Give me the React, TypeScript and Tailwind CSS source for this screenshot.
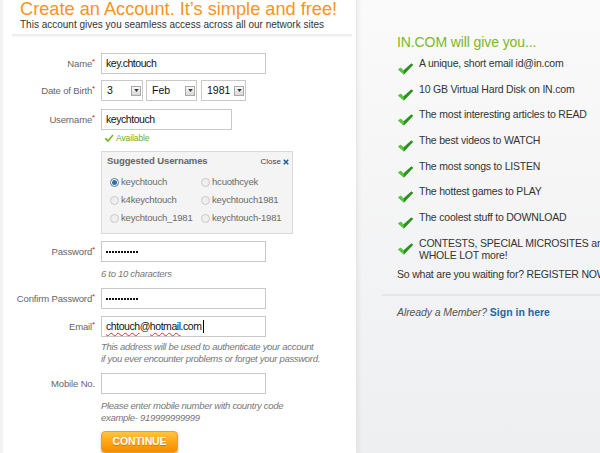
const Check = ({ className = "" }: { className?: string }) => (
  <svg viewBox="0 0 16 12" className={className}>
    <path d="M0.6 6.6 L3.2 4.8 L6 7.6 L13.8 0.4 L15.6 1.8 L6.4 11.6 Z" fill="#41b02c" />
    <path d="M6.4 11.6 L15.6 1.8 L13.8 0.4 L6 7.6 Z" fill="#2a9322" />
    <path d="M0.6 6.6 L3.2 4.8 L6 7.6 L6.4 11.6 Z" fill="#5cc43f" />
  </svg>
);

const SmallCheck = () => (
  <svg viewBox="0 0 12 11" className="w-[10px] h-[9px] shrink-0">
    <path d="M0.5 6 L2.6 4.6 L4.7 7 L10.2 0.6 L11.6 1.8 L4.9 10.2 Z" fill="#7ab829" />
  </svg>
);

const Arrow = () => (
  <span className="w-[10px] h-[10px] shrink-0 border border-[#a9a9a9] bg-gradient-to-b from-[#f7f7f7] to-[#d8d8d8] flex items-center justify-center">
    <svg viewBox="0 0 6 4" className="w-[5px] h-[3px]">
      <path d="M0 0 L6 0 L3 4 Z" fill="#333" />
    </svg>
  </span>
);

const Label = ({ text, req = true }: { text: string; req?: boolean }) => (
  <div className="w-[95px] text-right text-[9.5px] tracking-[-0.15px] leading-[12px] text-[#666] shrink-0 whitespace-nowrap">
    {text}
    {req && <span className="text-[#d0202a] text-[8px] align-top leading-[8px]">*</span>}
  </div>
);

const Dots = () => (
  <div className="flex gap-[1px]">
    {Array.from({ length: 11 }).map((_, i) => (
      <span key={i} className="w-[2px] h-[2px] bg-[#111]" />
    ))}
  </div>
);

const Input = ({ children, w }: { children?: React.ReactNode; w: string }) => (
  <div className={`${w} h-[21px] ml-[6px] border border-[#c9c9c9] bg-white flex items-center pl-[4px] text-[10.5px] tracking-[-0.45px] text-[#111] whitespace-nowrap`}>
    {children}
  </div>
);

const Select = ({ value, w }: { value: string; w: string }) => (
  <div className={`${w} h-[21px] border border-[#c9c9c9] bg-white flex items-center justify-between pl-[5px] pr-[1px] text-[10.5px] text-[#111]`}>
    <span>{value}</span>
    <Arrow />
  </div>
);

const Radio = ({ label, on = false }: { label: string; on?: boolean }) => (
  <div className="flex items-center gap-[2px] h-[18px] whitespace-nowrap">
    <span
      className={`w-[9px] h-[9px] shrink-0 rounded-full border ${on ? "border-[#55799b] bg-white" : "border-[#c9c9c9] bg-[#efefef]"} flex items-center justify-center`}
    >
      {on && <span className="w-[5px] h-[5px] rounded-full bg-[#2d6fa8]" />}
    </span>
    <span className="text-[9.5px] tracking-[-0.2px] text-[#6a6a6a]">{label}</span>
  </div>
);

const Hint = ({ children }: { children: React.ReactNode }) => (
  <div className="ml-[101px] text-[9.5px] tracking-[-0.3px] italic text-[#777] leading-[12px] whitespace-nowrap">{children}</div>
);

const perks = [
  "A unique, short email id@in.com",
  "10 GB Virtual Hard Disk on IN.com",
  "The most interesting articles to READ",
  "The best videos to WATCH",
  "The most songs to LISTEN",
  "The hottest games to PLAY",
  "The coolest stuff to DOWNLOAD",
];

export default function App() {
  return (
    <div className="w-[600px] h-[453px] overflow-hidden flex bg-white font-['Liberation_Sans',Arial,sans-serif]">
      {/* Left: form */}
      <div className="w-[356px] shrink-0 border-l-[3px] border-[#f2f2f2]">
        <div className="pl-[17px] -mt-[1px]">
          <h1 className="text-[18.2px] leading-[20px] text-[#f7941d] whitespace-nowrap">Create an Account. It’s simple and free!</h1>
          <p className="text-[10px] leading-[12px] text-[#333] whitespace-nowrap">This account gives you seamless access across all our network sites</p>
        </div>
        <div className="ml-[9px] mr-[4px] mt-[3px] h-[3px] bg-gradient-to-b from-[#e9e9e9] to-[#f8f8f8]" />

        <div className="mt-[16px] -ml-[3px]">
          <div className="flex items-center">
            <Label text="Name" />
            <Input w="w-[165px]">key.chtouch</Input>
          </div>

          <div className="flex items-center mt-[6px]">
            <Label text="Date of Birth" />
            <div className="flex ml-[6px]">
              <Select value="3" w="w-[42px]" />
              <div className="ml-[3px]">
                <Select value="Feb" w="w-[51px]" />
              </div>
              <div className="ml-[4px]">
                <Select value="1981" w="w-[45px]" />
              </div>
            </div>
          </div>

          <div className="flex items-center mt-[8px]">
            <Label text="Username" />
            <Input w="w-[131px]">keychtouch</Input>
          </div>
          <div className="ml-[104px] mt-[2px] flex items-center gap-[2px] h-[12px]">
            <SmallCheck />
            <span className="text-[8.5px] tracking-[-0.1px] leading-[12px] text-[#6ab023]">Available</span>
          </div>

          <div className="ml-[101px] mt-[7px] w-[192px] h-[83px] border border-[#dadada] bg-[#f4f4f4] pl-[5px] pt-[3px] relative">
            <div className="absolute right-[3px] top-[5px] flex items-center gap-[2px]">
              <span className="text-[8px] text-[#444] leading-[9px]">Close</span>
              <svg viewBox="0 0 8 8" className="w-[6px] h-[6px]">
                <path d="M1 1 L7 7 M7 1 L1 7" stroke="#1c5fa0" strokeWidth="2" />
              </svg>
            </div>
            <div className="text-[9.5px] tracking-[-0.1px] font-bold text-[#666] leading-[12px]">Suggested Usernames</div>
            <div className="grid grid-cols-[91px_1fr] mt-[6px] ml-[3px]">
              <Radio label="keychtouch" on />
              <Radio label="hcuothcyek" />
              <Radio label="k4keychtouch" />
              <Radio label="keychtouch1981" />
              <Radio label="keychtouch_1981" />
              <Radio label="keychtouch-1981" />
            </div>
          </div>

          <div className="flex items-center mt-[7px]">
            <Label text="Password" />
            <Input w="w-[165px]">
              <Dots />
            </Input>
          </div>
          <div className="mt-[6px] mb-[8px] h-[12px]">
            <Hint>6 to 10 characters</Hint>
          </div>

          <div className="flex items-center">
            <Label text="Confirm Password" />
            <Input w="w-[165px]">
              <Dots />
            </Input>
          </div>

          <div className="flex items-center mt-[7px]">
            <Label text="Email" />
            <Input w="w-[165px]">
              <span className="underline decoration-wavy decoration-[#e0302a] decoration-1 underline-offset-2">chtouch</span>
              @
              <span className="underline decoration-wavy decoration-[#e0302a] decoration-1 underline-offset-2">hotmail</span>
              .com
              <span className="w-px h-[13px] bg-black ml-[1px]" />
            </Input>
          </div>
          <div className="mt-[4px]">
            <Hint>
              This address will be used to authenticate your account
              <br />
              if you ever encounter problems or forget your password.
            </Hint>
          </div>

          <div className="flex items-center mt-[8px]">
            <Label text="Mobile No." req={false} />
            <Input w="w-[165px]" />
          </div>
          <div className="mt-[6px]">
            <Hint>
              Please enter mobile number with country code
              <br />
              example- 919999999999
            </Hint>
          </div>

          <div className="ml-[101px] mt-[7px] w-[77px] h-[22px] rounded-[4px] bg-gradient-to-b from-[#ffc53d] via-[#ffa412] to-[#f58c00] border border-[#eaa12a] shadow-[0_1px_2px_rgba(0,0,0,0.3)] flex items-center justify-center text-[10.5px] tracking-[-0.1px] font-bold text-white [text-shadow:0_1px_0_rgba(160,80,0,0.5)]">
            CONTINUE
          </div>
        </div>
      </div>

      {/* Right: benefits */}
      <div className="flex-1 bg-gradient-to-b from-[#fafafa] to-[#eeeff1] border-l border-[#e6e6e6] shadow-[inset_4px_0_4px_-2px_rgba(0,0,0,0.05)]">
        <div className="pl-[40px] pt-[33px]">
          <h2 className="text-[14px] tracking-[-0.1px] leading-[18px] text-[#7ab829] whitespace-nowrap">IN.COM will give you...</h2>
          <ul className="mt-[6px]">
            {perks.map((p) => (
              <li key={p} className="flex items-start h-[25.7px]">
                <Check className="w-[17px] h-[12px] mt-[6px] shrink-0" />
                <span className="ml-[5px] text-[10.5px] tracking-[-0.2px] leading-[12px] text-[#333] whitespace-nowrap">{p}</span>
              </li>
            ))}
            <li className="flex items-start">
              <Check className="w-[17px] h-[12px] mt-[6px] shrink-0" />
              <span className="ml-[5px] text-[10.5px] tracking-[-0.2px] leading-[12px] text-[#333] whitespace-nowrap">
                CONTESTS, SPECIAL MICROSITES and a
                <br />
                WHOLE LOT more!
              </span>
            </li>
          </ul>
          <p className="mt-[7px] text-[10.5px] tracking-[-0.2px] leading-[12px] text-[#333] whitespace-nowrap">So what are you waiting for? REGISTER NOW!</p>
        </div>
        <div className="ml-[25px] mt-[14px] h-[2px] bg-[#e4e6e8]" />
        <div className="pl-[40px] mt-[10px] text-[10.5px] leading-[13px] whitespace-nowrap">
          <span className="italic text-[#555] tracking-[-0.1px]">Already a Member?</span>{" "}
          <span className="font-bold text-[#1b6aa5]">Sign in here</span>
        </div>
      </div>
    </div>
  );
}
